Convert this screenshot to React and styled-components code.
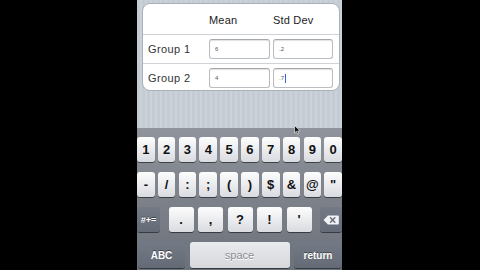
import React from 'react';
import styled, { createGlobalStyle } from 'styled-components';

const Global = createGlobalStyle`
  html, body {
    margin: 0;
    padding: 0;
    background: #000;
    height: 270px;
    overflow: hidden;
  }
  body {
    font-family: "Liberation Sans", Arial, sans-serif;
  }
`;

const rows = [
  { label: 'Group 1', mean: '6', sd: '.2' },
  { label: 'Group 2', mean: '4', sd: '.7', focus: true },
];

const digits = ['1', '2', '3', '4', '5', '6', '7', '8', '9', '0'];
const symbols = ['-', '/', ':', ';', '(', ')', '$', '&', '@', '"'];
const punct = ['.', ',', '?', '!', "'"];

function Backspace() {
  return (
    <svg width="16" height="10" viewBox="0 0 16 10">
      <path d="M5 0.5 H15 a0.8 0.8 0 0 1 0.8 0.8 V8.7 a0.8 0.8 0 0 1 -0.8 0.8 H5 L0.5 5 Z" fill="#f2f3f5" />
      <path d="M7.5 2.8 L11.8 7.2 M11.8 2.8 L7.5 7.2" stroke="#6c727c" strokeWidth="1.6" strokeLinecap="round" />
    </svg>
  );
}

function Pointer() {
  return (
    <svg width="7" height="10" viewBox="0 0 7 10">
      <path d="M0.5 0.5 V8 L2.4 6.3 L3.7 9.3 L4.9 8.8 L3.7 5.9 L6.2 5.9 Z" fill="#111" stroke="#e8e8e8" strokeWidth="0.7" />
    </svg>
  );
}

export default function App() {
  return (
    <Page>
      <Global />
      <Phone>
        <TableArea>
          <Card>
            <HeaderRow>
              <span></span>
              <HeadText>Mean</HeadText>
              <HeadText>Std Dev</HeadText>
            </HeaderRow>
            {rows.map((r, i) => (
              <DataRow key={r.label} last={i === rows.length - 1}>
                <Label>{r.label}</Label>
                <Field>{r.mean}</Field>
                <Field>
                  {r.sd}
                  {r.focus && <Caret />}
                </Field>
              </DataRow>
            ))}
          </Card>
          <MouseCursor>
            <Pointer />
          </MouseCursor>
        </TableArea>
        <Keyboard>
          <KeyRow>
            {digits.map((k) => (
              <Key key={k}>{k}</Key>
            ))}
          </KeyRow>
          <KeyRow>
            {symbols.map((k) => (
              <Key key={k}>{k}</Key>
            ))}
          </KeyRow>
          <SplitRow>
            <Key dark small w={23}>#+=</Key>
            <MidGroup>
              {punct.map((k) => (
                <Key key={k} w={25}>{k}</Key>
              ))}
            </MidGroup>
            <Key dark w={22}>
              <Backspace />
            </Key>
          </SplitRow>
          <BottomRow>
            <Key dark label w={47}>ABC</Key>
            <SpaceKey>space</SpaceKey>
            <Key dark label w={48}>return</Key>
          </BottomRow>
        </Keyboard>
      </Phone>
    </Page>
  );
}

const Page = styled.div`
  width: 480px;
  height: 270px;
  background: #000;
  display: flex;
  justify-content: center;
`;

const Phone = styled.div`
  width: 205px;
  height: 270px;
  display: flex;
  flex-direction: column;
  margin-left: -1px;
`;

const TableArea = styled.div`
  position: relative;
  height: 128px;
  padding: 3px 0 0 5px;
  box-sizing: border-box;
  background: repeating-linear-gradient(
    90deg,
    #c4cbd3 0px,
    #c4cbd3 3px,
    #ccd2d9 3px,
    #ccd2d9 5px
  );
`;

const Card = styled.div`
  width: 198px;
  height: 88px;
  box-sizing: border-box;
  background: #fff;
  border: 1px solid #a9b0b8;
  border-radius: 8px;
  overflow: hidden;
`;

const HeaderRow = styled.div`
  display: grid;
  grid-template-columns: 63px 61px 60px;
  column-gap: 3px;
  align-items: center;
  height: 29px;
  border-bottom: 1px solid #cfd2d6;
  padding-top: 1px;
`;

const HeadText = styled.span`
  font-size: 11px;
  color: #222;
  letter-spacing: 0.2px;
`;

const DataRow = styled.div`
  display: grid;
  grid-template-columns: 63px 61px 60px;
  column-gap: 3px;
  align-items: center;
  height: 28px;
  border-bottom: ${(p) => (p.last ? 'none' : '1px solid #cfd2d6')};
`;

const Label = styled.span`
  font-size: 11px;
  color: #333;
  padding-left: 5px;
  letter-spacing: 0.4px;
`;

const Field = styled.div`
  height: 20px;
  box-sizing: border-box;
  border: 1px solid #b9bdc2;
  border-top-color: #a4a8ad;
  border-radius: 3px;
  box-shadow: inset 0 1px 1px rgba(0, 0, 0, 0.12);
  background: #fff;
  display: flex;
  align-items: center;
  padding-left: 5px;
  font-size: 6px;
  color: #555;
`;

const Caret = styled.span`
  display: inline-block;
  width: 1px;
  height: 9px;
  margin-left: 1px;
  background: #3a62d8;
`;

const MouseCursor = styled.div`
  position: absolute;
  left: 157px;
  top: 125px;
  line-height: 0;
  z-index: 2;
`;

const Keyboard = styled.div`
  flex: 1;
  display: flex;
  flex-direction: column;
  gap: 10px;
  padding: 9px 0 2px;
  box-sizing: border-box;
  background: linear-gradient(#8e939c, #7c818a 50%, #6c727b);
`;

const KeyRow = styled.div`
  display: flex;
  gap: 3.2px;
  height: 25px;
`;

const SplitRow = styled.div`
  display: flex;
  justify-content: space-between;
  height: 25px;
`;

const MidGroup = styled.div`
  display: flex;
  gap: 4.5px;
`;

const BottomRow = styled.div`
  display: flex;
  gap: 4.5px;
  height: 26px;
  padding-left: 1px;
`;

const Key = styled.div`
  flex: ${(p) => (p.w ? `0 0 ${p.w}px` : '1')};
  display: flex;
  align-items: center;
  justify-content: center;
  border-radius: 3px;
  box-sizing: border-box;
  background: ${(p) =>
    p.dark
      ? 'linear-gradient(#737a85, #646b76)'
      : 'linear-gradient(#fdfdfd, #e8e9ec 60%, #dadbe0)'};
  box-shadow: 0 1px 0 rgba(30, 34, 40, 0.7);
  color: ${(p) => (p.dark ? '#fff' : '#111')};
  font-weight: bold;
  font-size: ${(p) => (p.small ? '9px' : p.label ? '10px' : '13px')};
  text-shadow: ${(p) => (p.dark ? '0 -1px 0 rgba(0,0,0,0.45)' : 'none')};
`;

const SpaceKey = styled.div`
  flex: 0 0 100px;
  display: flex;
  align-items: center;
  justify-content: center;
  border-radius: 3px;
  background: linear-gradient(#e9eaed, #d6d8dc);
  box-shadow: 0 1px 0 rgba(30, 34, 40, 0.7);
  color: #8a8c90;
  font-size: 11px;
  text-shadow: 0 1px 0 #fff;
`;
